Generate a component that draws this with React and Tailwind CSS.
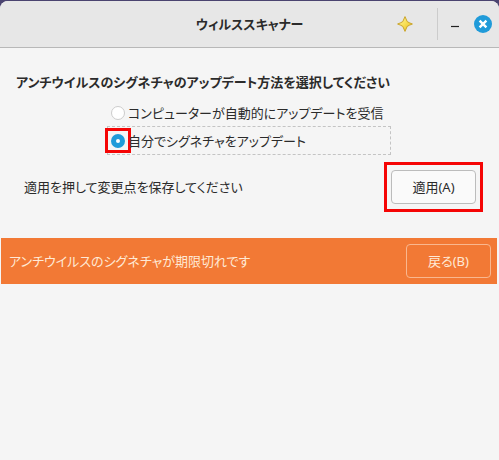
const options = [
  { id: 'auto', label: 'コンピューターが自動的にアップデートを受信' },
  { id: 'manual', label: '自分でシグネチャをアップデート' },
];

function TitleBar() {
  return (
    <header className="grid grid-cols-[1fr_auto_1fr] items-center h-[47px] rounded-t-lg bg-[#e7e7e7] border-b border-[#b8b8b8]">
      <span />
      <h1 className="font-bold">ウィルススキャナー</h1>
      <div className="flex items-center justify-end pr-[7px]">
        <button type="button" aria-label="お気に入り" className="mr-6">
          <svg width="16" height="16" viewBox="0 0 16 16" fill="none">
            <defs>
              <linearGradient id="star" x1="0" y1="0" x2="1" y2="1">
                <stop offset="0" stopColor="#fff7ae" />
                <stop offset="0.5" stopColor="#f8df55" />
                <stop offset="1" stopColor="#e3b51c" />
              </linearGradient>
            </defs>
            <path d="M8 0.6L10.2 5.6Q12.5 7 15.4 8Q12.5 9 10.2 10.4L8 15.4L5.8 10.4Q3.5 9 0.6 8Q3.5 7 5.8 5.6Z" fill="url(#star)" stroke="#c9a42c" strokeWidth="1" strokeLinejoin="round" />
          </svg>
        </button>
        <span className="w-px h-8 bg-[#cccccc]" />
        <button type="button" aria-label="最小化" className="ml-3">
          <svg width="10" height="18" viewBox="0 0 10 18">
            <path d="M1 11.5H9" stroke="#222222" strokeWidth="1.2" />
          </svg>
        </button>
        <button type="button" aria-label="閉じる" className="ml-[14px]">
          <svg width="18" height="18" viewBox="0 0 18 18">
            <circle cx="9" cy="9" r="9" fill="#209bd9" />
            <path d="M5.6 5.6L12.4 12.4M12.4 5.6L5.6 12.4" stroke="white" strokeWidth="2.4" />
          </svg>
        </button>
      </div>
    </header>
  );
}

function UpdateOption({ id, label }) {
  const selected = id === 'manual';
  return (
    <label
      htmlFor={id}
      className={`flex items-center border border-dashed ${selected ? 'h-[29px] border-[#c4c4c4]' : 'h-[26px] border-transparent'}`}
    >
      <span className={`flex items-center justify-center w-[26px] h-[25px] -ml-[3px] border-[3px] ${selected ? 'border-[#f50505]' : 'border-transparent'}`}>
        <input
          id={id}
          type="radio"
          name="update"
          defaultChecked={selected}
          className="appearance-none shrink-0 w-[14px] h-[14px] rounded-full bg-white border border-[#cccccc] checked:border-[5px] checked:border-[#209bd9]"
        />
      </span>
      <span className="-ml-[3px]">{label}</span>
    </label>
  );
}

export default function App() {
  return (
    <div className="flex flex-col min-h-screen bg-[#4b4470] pt-px">
      <div
        className="grow rounded-t-lg bg-[#f5f5f5] text-[13px] leading-5 text-[#2b2b2b] font-['Noto_Sans','Noto_Sans_CJK_JP',sans-serif] [font-feature-settings:'palt','kern']"
        lang="ja"
      >
        <TitleBar />

        <main className="pt-6">
          <fieldset className="px-4">
            <legend className="font-bold">アンチウイルスのシグネチャのアップデート方法を選択してください</legend>
            <div className="ml-[91px] mr-[92px] pt-2">
              {options.map((option) => (
                <UpdateOption key={option.id} {...option} />
              ))}
            </div>
          </fieldset>

          <div className="flex items-center justify-between mt-[7px] pl-6 pr-4">
            <p>適用を押して変更点を保存してください</p>
            <div className="px-1 py-[5px] border-[3px] border-[#f50505]">
              <button type="button" className="block w-[85px] h-[34px] rounded border border-[#bcbcbc] bg-[#fafafa]">
                適用(A)
              </button>
            </div>
          </div>

          <div className="flex items-center justify-between mt-[26px] ml-px mr-[2px] pl-2 pr-[6px] h-[46px] bg-[#f27935] text-[#ffe9d6]">
            <p>アンチウイルスのシグネチャが期限切れです</p>
            <button type="button" className="w-[85px] h-[34px] rounded-sm border border-[#f9b78f]">
              戻る(B)
            </button>
          </div>
        </main>
      </div>
    </div>
  );
}
